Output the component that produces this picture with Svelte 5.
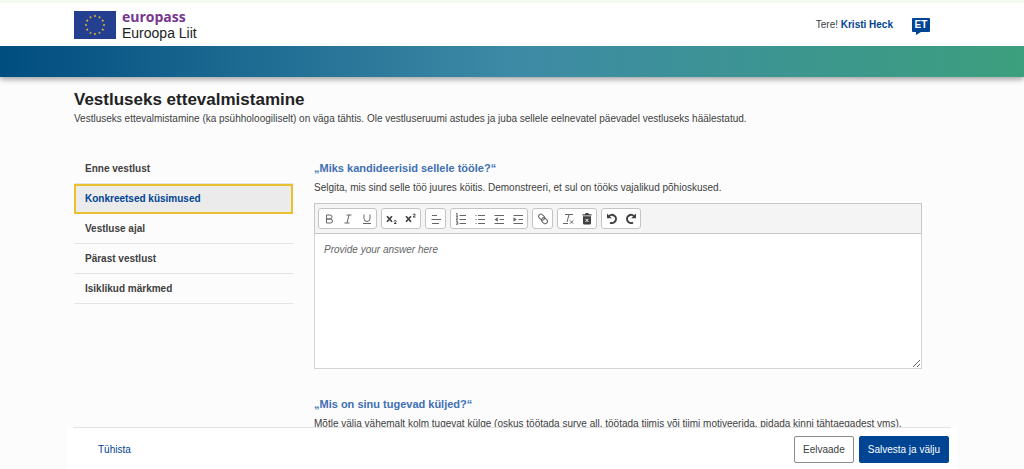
<script>
	const sections = [
		'Enne vestlust',
		'Konkreetsed küsimused',
		'Vestluse ajal',
		'Pärast vestlust',
		'Isiklikud märkmed'
	];
	let active = $state(1);
	let answer = $state('');

	// the twelve stars of the flag
	const stars = Array.from({ length: 12 }, (_, i) => {
		const a = (i * Math.PI) / 6;
		return { x: 21 + 9 * Math.sin(a), y: 14 - 9 * Math.cos(a) };
	});

	// toolbar buttons, grouped
	const toolbar = [
		['bold', 'italic', 'underline'],
		['sub', 'super'],
		['align'],
		['ordered', 'bullet', 'outdent', 'indent'],
		['link'],
		['clean', 'trash'],
		['undo', 'redo']
	];
</script>

{#snippet icon(name)}
	<svg class="icon" viewBox="0 0 14 14" aria-hidden="true">
		{#if name === 'bold'}
			<path d="M4.500 3h3.500a2 2 0 0 1 0 4H4.500zM4.500 7h4a2 2 0 0 1 0 4h-4z" />
		{:else if name === 'italic'}
			<path d="M5.500 3h5M3.500 11h5M8 3L6 11" />
		{:else if name === 'underline'}
			<path d="M4 2.500v4a3 3 0 0 0 6 0v-4M3 11.500h8" />
		{:else if name === 'sub' || name === 'super'}
			<path class="cross" d="M2 4.200l5 5.600M7 4.200L2 9.800" />
			<path
				class="dark"
				transform={name === 'sub' ? 'translate(0 6.500)' : ''}
				d="M9 3q.2-1 1.200-1t1.100.9q0 .6-2.300 2.100h2.500"
			/>
		{:else if name === 'align'}
			<path d="M3 3.500h5M2.500 7.500h9.500M3 11.500h7" />
		{:else if name === 'ordered'}
			<path d="M5.500 3.500h6.500M5.500 7.500h6.500M5.500 11.500h6.500" />
			<path d="M2 1.800l1-.5v3M2 4.300h2M2 6h1.700L2 8h2M2 9.700h1.700v2.600H2M2.500 11h1" />
		{:else if name === 'bullet'}
			<path d="M5 3.500h7M5 7.500h7M5 11.500h7M2.500 3.500h1M2.500 7.500h1M2.500 11.500h1" />
		{:else if name === 'outdent'}
			<path d="M2.500 3.500h9.500M7.500 7.500h4.500M2.500 11.500h9.500" />
			<path class="fill" d="M5.800 5.200v4.600L2.500 7.500z" />
		{:else if name === 'indent'}
			<path d="M2.500 3.500h9.500M7.500 7.500h4.500M2.500 11.500h9.500" />
			<path class="fill" d="M2.500 5.200v4.600L5.800 7.500z" />
		{:else if name === 'link'}
			<g transform="rotate(42 7 7)">
				<rect x="1.500" y="4.200" width="6.500" height="4.600" rx="2.300" />
				<rect x="6" y="5" width="6.500" height="4.600" rx="2.300" />
			</g>
		{:else if name === 'clean'}
			<path d="M4 2.500h8M8 2.500L6 10M2 11.500h5M9 8.500l3.200 3.200M12.200 8.500L9 11.700" />
		{:else if name === 'trash'}
			<path
				class="solid"
				d="M2.500 2.200H5l.8-1.200h2.400l.8 1.200h2.500v1.300h-9zM3 4.200h8v7.100q0 1.200-1.200 1.200H4.200Q3 12.500 3 11.300z"
			/>
			<path class="cut" d="M5.500 6.800l3 3.200M8.500 6.800l-3 3.200" />
		{:else}
			<g transform={name === 'redo' ? 'matrix(-1 0 0 1 14 0)' : ''}>
				<path class="thick" d="M3.600 4.500A4.100 4.100 0 1 1 5 10.600" />
				<path class="solid" d="M2 1.500v4.800h4.800z" />
			</g>
		{/if}
	</svg>
{/snippet}

<header>
	<div class="container top">
		<a class="logo" href="/">
			<svg class="flag" viewBox="0 0 42 28" aria-hidden="true">
				<rect width="42" height="28" fill="#243f8f" />
				{#each stars as s}
					<polygon
						transform="translate({s.x} {s.y})"
						points="0,-1.400 .4,-.4 1.400,-.4 .6,.3 .9,1.300 0,.7 -.9,1.300 -.6,.3 -1.400,-.4 -.4,-.4"
						fill="#e5c52e"
					/>
				{/each}
			</svg>
			<span class="names">
				<span class="europass">europass</span>
				<span class="union">Euroopa Liit</span>
			</span>
		</a>
		<div class="user">
			<span>Tere! <a href="#profile">Kristi Heck</a></span>
			<button class="lang" aria-label="Keel: ET">ET</button>
		</div>
	</div>
	<div class="band"></div>
</header>

<div class="container page">
	<h1>Vestluseks ettevalmistamine</h1>
	<p>
		Vestluseks ettevalmistamine (ka psühholoogiliselt) on väga tähtis. Ole vestluseruumi astudes ja
		juba sellele eelnevatel päevadel vestluseks häälestatud.
	</p>

	<div class="columns">
		<nav>
			{#each sections as section, i}
				<button class:active={active === i} onclick={() => (active = i)}>{section}</button>
			{/each}
		</nav>

		<main>
			<section>
				<h2><label for="answer">„Miks kandideerisid sellele tööle?“</label></h2>
				<p>Selgita, mis sind selle töö juures köitis. Demonstreeri, et sul on tööks vajalikud põhioskused.</p>
				<div class="toolbar">
					{#each toolbar as group}
						<div class="group">
							{#each group as name}
								<button aria-label={name}>{@render icon(name)}</button>
							{/each}
						</div>
					{/each}
				</div>
				<textarea id="answer" placeholder="Provide your answer here" bind:value={answer}></textarea>
			</section>

			<section>
				<h2>„Mis on sinu tugevad küljed?“</h2>
				<p>
					Mõtle välja vähemalt kolm tugevat külge (oskus töötada surve all, töötada tiimis või tiimi
					motiveerida, pidada kinni tähtaegadest vms).
				</p>
			</section>
		</main>
	</div>
</div>

<footer>
	<div class="actions">
		<a href="#cancel">Tühista</a>
		<button class="preview">Eelvaade</button>
		<button class="save">Salvesta ja välju</button>
	</div>
</footer>

<style>
	:global(body) {
		background: #fcfcfc;
		color: #404040;
		font: 10px/14px 'Liberation Sans', Arial, sans-serif;
	}

	button,
	textarea {
		box-sizing: border-box;
		font: inherit;
		color: inherit;
	}

	a {
		color: #004494;
		text-decoration: none;
	}

	.container {
		max-width: 876px;
		margin: 0 auto;
	}

	header {
		background: #fff;
		border-top: 3px solid #f4faf0;
		box-shadow: 0 2px 6px rgba(0, 0, 0, 0.4);
	}

	.top {
		height: 43px;
		display: flex;
		align-items: center;
		justify-content: space-between;
	}

	.logo {
		display: flex;
		align-items: center;
		gap: 6px;
	}

	.flag {
		width: 42px;
		height: 28px;
	}

	.names {
		display: flex;
		flex-direction: column;
		line-height: 16px;
	}

	.europass {
		font-family: 'Open Sans', 'Noto Sans', sans-serif;
		font-weight: 700;
		font-size: 14px;
		color: #76368f;
	}

	.union {
		font-size: 14px;
		color: #222;
	}

	.user {
		display: flex;
		align-items: center;
		gap: 19px;
		margin-right: 20px;
	}

	.user a {
		font-weight: 700;
	}

	.lang {
		position: relative;
		width: 18px;
		height: 14px;
		padding: 0;
		border: 0;
		border-radius: 1px;
		background: #004494;
		color: #fff;
		font-weight: 700;
		line-height: 14px;
	}

	.lang::after {
		content: '';
		position: absolute;
		left: 4px;
		top: 100%;
		border-top: 3px solid #004494;
		border-right: 5px solid transparent;
	}

	.band {
		height: 31px;
		background: linear-gradient(90deg, #004d80, #3d8aa6 50%, #3c9f7d);
	}

	.page {
		padding-top: 13px;
	}

	h1 {
		margin: 0;
		font-size: 17px;
		line-height: 20px;
		color: #222;
	}

	p {
		margin: 0;
		padding: 2px 0 0;
	}

	.columns {
		display: grid;
		grid-template-columns: 219px 1fr;
		gap: 21px;
		margin: 28px 28px 0 0;
	}

	nav {
		display: flex;
		flex-direction: column;
	}

	nav button {
		height: 30px;
		padding: 0 11px;
		border: 0;
		border-bottom: 1px solid #e4e4e4;
		background: none;
		font-weight: 700;
		text-align: left;
	}

	nav .active {
		padding: 0 9px;
		border: 2px solid #e9c02f;
		background: #ebebeb;
		color: #004494;
	}

	section + section {
		margin-top: 21px;
	}

	h2 {
		margin: 0;
		padding: 7px 0 4px;
		font-size: 11px;
		line-height: 14px;
		color: #406fb3;
	}

	.toolbar {
		display: flex;
		gap: 4px;
		margin-top: 8px;
		padding: 4px 3px;
		border: 1px solid #c8c8c8;
		background: #f4f4f4;
	}

	.group {
		display: flex;
		border: 1px solid #c4c4c4;
		border-radius: 3px;
		background: #fff;
	}

	.group button {
		display: flex;
		align-items: center;
		justify-content: center;
		width: 19px;
		height: 19px;
		padding: 0;
		border: 0;
		background: none;
	}

	.icon {
		width: 14px;
		height: 14px;
		fill: none;
		stroke: #666;
		stroke-width: 1;
	}

	.icon .dark {
		stroke: #404040;
	}

	.icon .cross {
		stroke: #404040;
		stroke-width: 1.700;
	}

	.icon .thick {
		stroke: #404040;
		stroke-width: 2;
	}

	.icon .fill {
		fill: #666;
		stroke: none;
	}

	.icon .solid {
		fill: #404040;
		stroke: none;
	}

	.icon .cut {
		stroke: #fff;
	}

	textarea {
		display: block;
		width: 100%;
		height: 135px;
		padding: 9px;
		border: 1px solid #d4d4d4;
		border-top: 0;
		background: #fff;
		resize: vertical;
	}

	textarea::placeholder {
		color: #666;
		font-style: italic;
	}

	footer {
		position: fixed;
		bottom: 0;
		left: 0;
		right: 0;
		max-width: 892px;
		margin: 0 auto;
		background: #fff;
	}

	.actions {
		display: flex;
		align-items: center;
		gap: 5px;
		margin: 0 7px;
		padding: 8px 2px 6px 25px;
		border-top: 1px solid #e2e2e2;
	}

	.actions a {
		margin-right: auto;
	}

	.actions button {
		height: 27px;
		padding: 0 8px;
		border: 1px solid #8c8c8c;
		border-radius: 2px;
		background: #fff;
	}

	.actions .save {
		border-color: #004494;
		background: #004494;
		color: #fff;
	}
</style>
